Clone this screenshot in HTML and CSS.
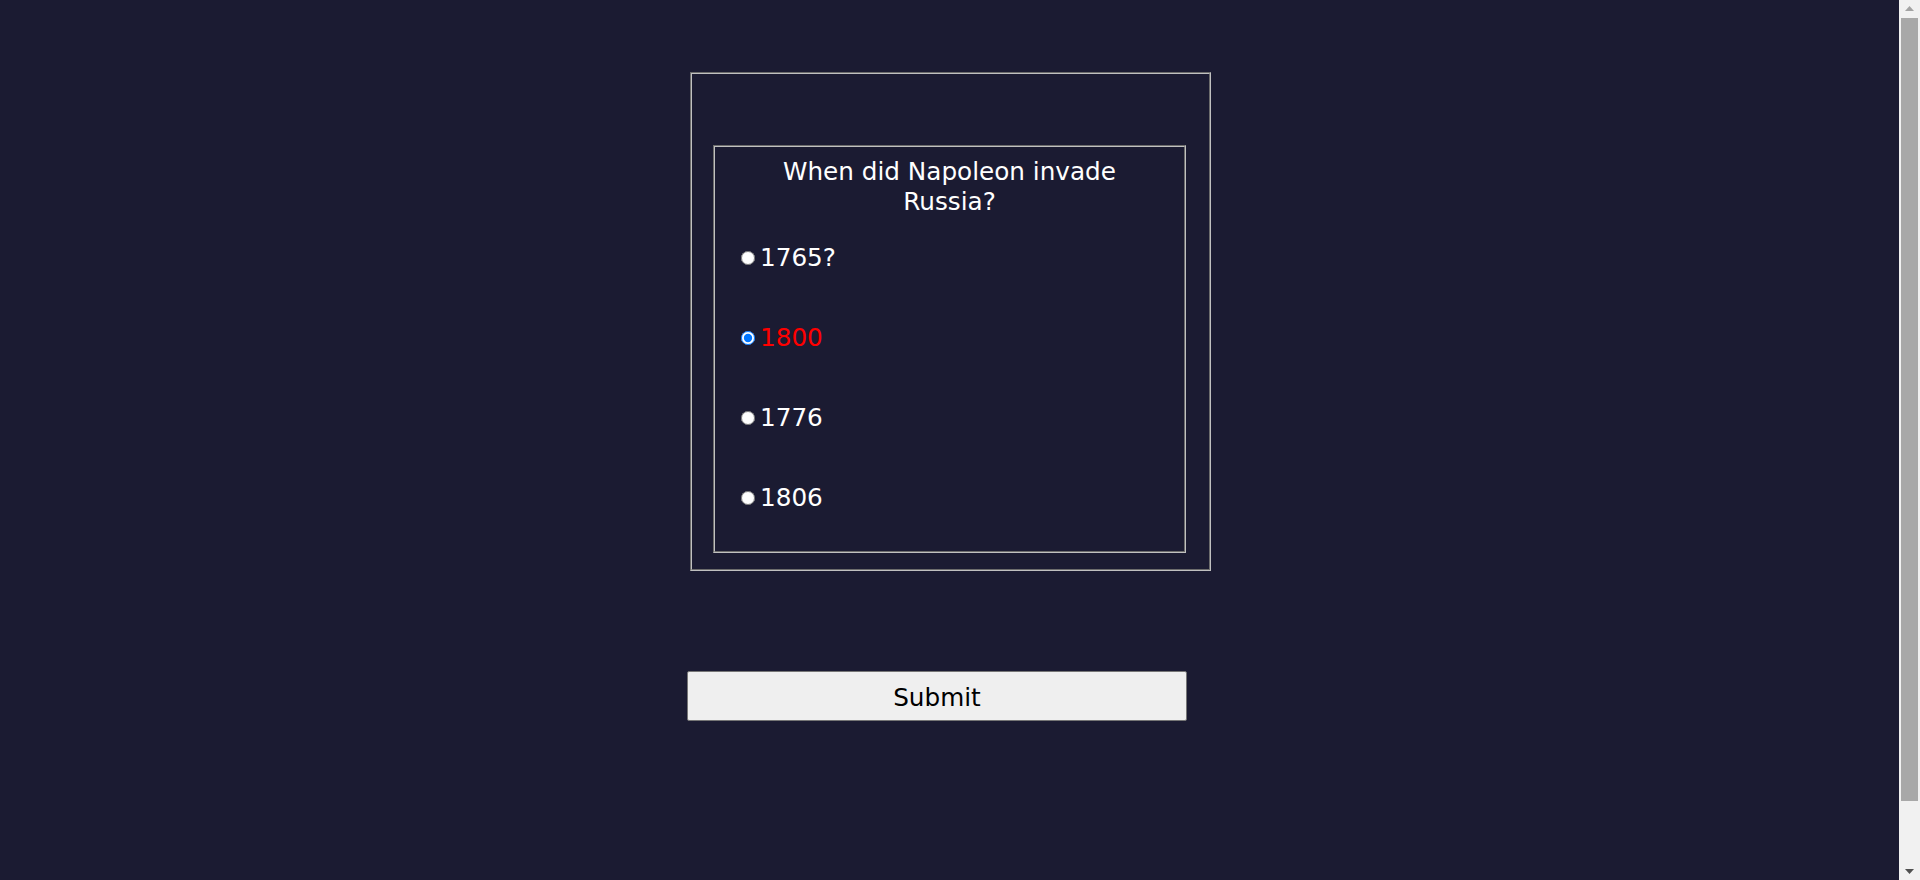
FILE: index.html
```html
<!DOCTYPE html>
<html lang="en">
<head>
<meta charset="utf-8">
<title>Quiz</title>
<link rel="stylesheet" href="styles.css">
</head>
<body>
<main class="page">
  <form class="quiz">
    <div class="frame">
      <div class="card">
        <h2 class="question">When did Napoleon invade Russia?</h2>
        <div class="options">
          <label class="option"><input class="radio" type="radio" name="q"><span>1765?</span></label>
          <label class="option option-selected"><input class="radio" type="radio" name="q" checked><span>1800</span></label>
          <label class="option"><input class="radio" type="radio" name="q"><span>1776</span></label>
          <label class="option"><input class="radio" type="radio" name="q"><span>1806</span></label>
        </div>
      </div>
    </div>
    <button class="submit" type="button">Submit</button>
  </form>
</main>
<div class="scrollbar" aria-hidden="true">
  <div class="sb-arrow sb-up"><svg width="9" height="5" viewBox="0 0 9 5"><path d="M0 5 L4.5 0 L9 5 Z" fill="#a3a3a3"/></svg></div>
  <div class="sb-track"><div class="sb-thumb"></div></div>
  <div class="sb-arrow sb-down"><svg width="9" height="5" viewBox="0 0 9 5"><path d="M0 0 L4.5 5 L9 0 Z" fill="#505050"/></svg></div>
</div>
</body>
</html>
```

FILE: styles.css
```css
html, body {
  margin: 0;
  background: #1b1b32;
}

body {
  font-family: "DejaVu Sans", Verdana, sans-serif;
  color: #ffffff;
  padding-right: 19px;
}

.page {
  padding: 72px 0 230px;
}

.quiz {
  width: 521px;
  margin: 0 auto;
}

.frame {
  border: 2px groove #c0c0c0;
  padding: 71px 23px 16px 21px;
}

.card {
  border: 2px groove #c0c0c0;
  padding: 10px 0 38px;
}

.question {
  margin: 0;
  padding: 0 50px;
  text-align: center;
  font-size: 24.7px;
  line-height: 30px;
  font-weight: normal;
  color: #ffffff;
}

.options {
  margin-top: 26px;
  padding-left: 26px;
  display: flex;
  flex-direction: column;
  gap: 50px;
}

.option {
  display: flex;
  align-items: center;
  font-size: 24.7px;
  line-height: 30px;
  height: 30px;
  color: #ffffff;
}

.option-selected {
  color: #ff0000;
}

.radio {
  width: 14px;
  height: 14px;
  margin: 0 5px 0 0;
  flex: none;
}

.submit {
  display: block;
  width: 500px;
  height: 50px;
  margin: 100px 0 0 -3px;
  padding: 3px 0 0;
  background: #efefef;
  border: 1px solid #767676;
  border-radius: 2px;
  font-family: "DejaVu Sans", Verdana, sans-serif;
  font-size: 24.7px;
  color: #000000;
}

.scrollbar {
  position: fixed;
  top: 0;
  right: 0;
  width: 21px;
  height: 100vh;
  background: #f1f1f1;
  display: flex;
  flex-direction: column;
}

.sb-arrow {
  height: 17px;
  display: flex;
  align-items: center;
  justify-content: center;
  flex: none;
}

.sb-track {
  flex: 1;
  padding: 1px 2px 0;
}

.sb-thumb {
  height: 783px;
  background: #a8a8a8;
}
```
